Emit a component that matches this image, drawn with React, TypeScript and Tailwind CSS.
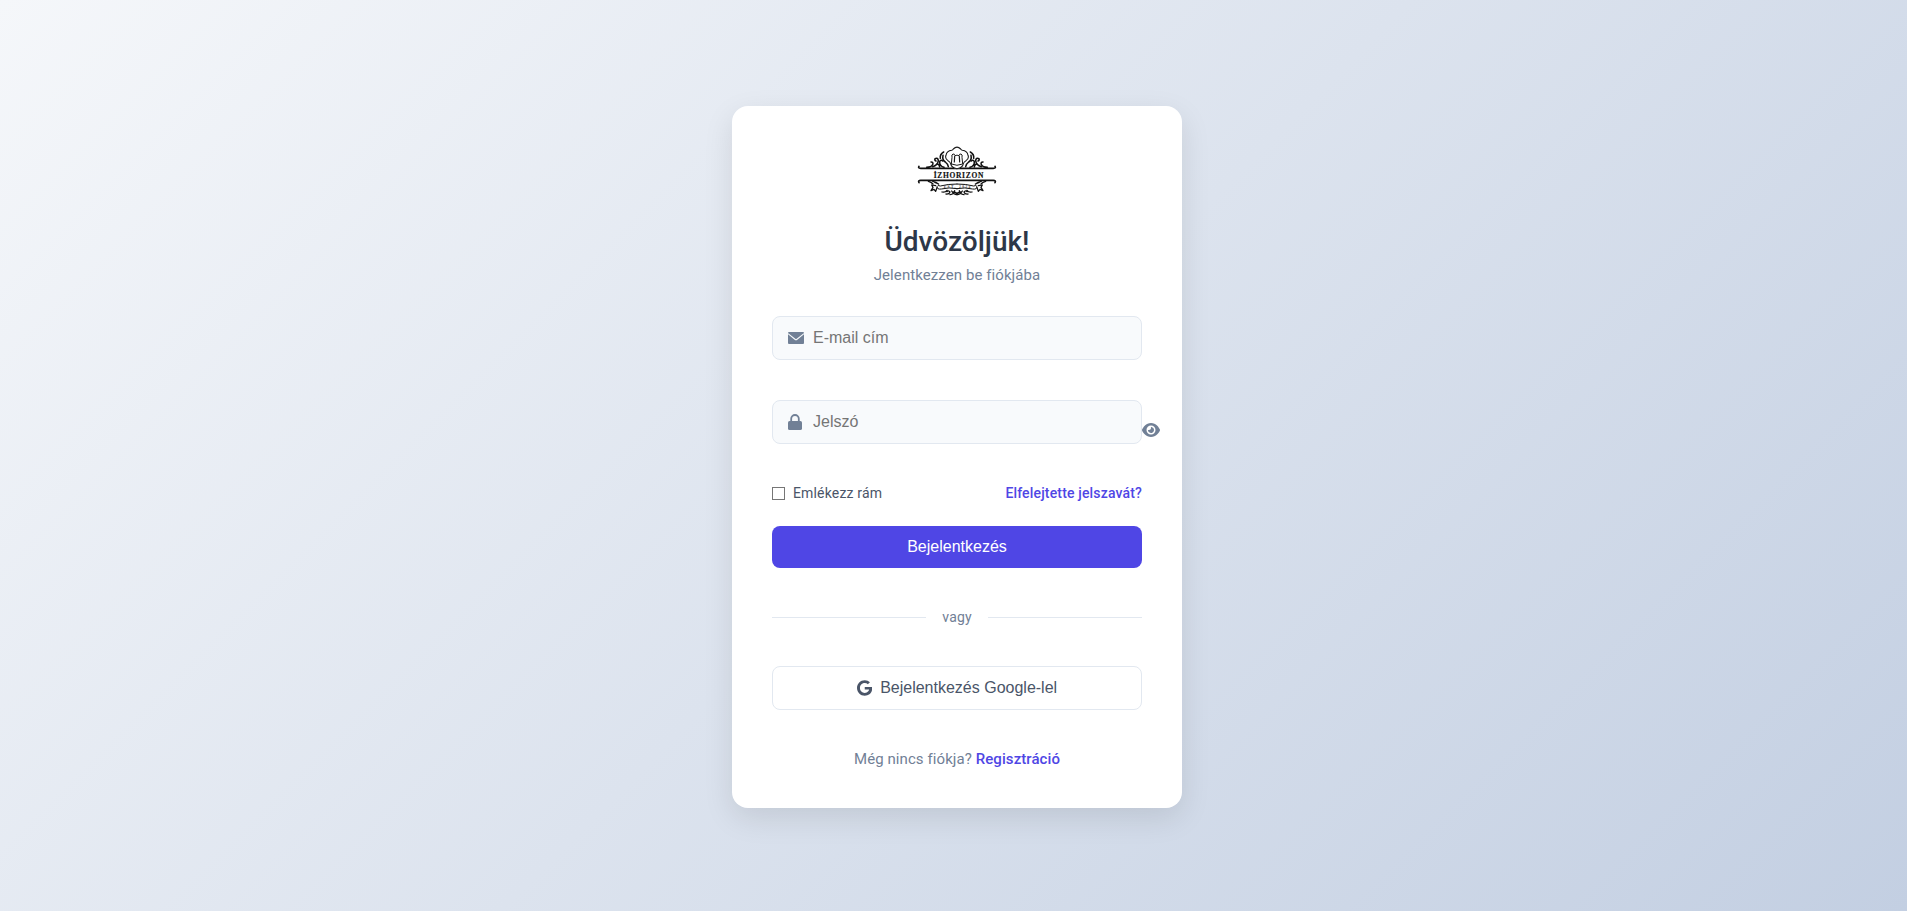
import React, { useState } from "react";
import { FaEye, FaGoogle } from "react-icons/fa6";

function Ornament() {
  return (
    <g fill="none" stroke="#111" strokeLinecap="round" strokeLinejoin="round">
      <g strokeWidth="5">
        <path d="M57 94q-4 6 5 6H171" />
        <path d="M57 143q-4-7 5-7H171" />
      </g>
      <g strokeWidth="4.6">
        <path d="M80 97q14 0 18-8q3-8-5-8" />
        <path d="M98 95q15-4 17-18q-1-10-10-6q-2 5 3 7" />
        <path d="M112 87q7 2 7 9M132 97q-14-4-13-17q4-7 9-2" />
        <path d="M121 70q-2-12 10-19M129 61q-3 14 7 20q8 6 9 14" />
      </g>
      <g strokeWidth="3.8">
        <path d="M85 139q9 2 14 8M98 139q11 1 17 8M104 142l12 5" />
        <path d="M107 152l-12-2l4 7l-6 10l9-4l5 6l4-11" />
        <path d="M171 147q-28 0-50 6q-8-4-10 2q0 9 13 7q22-6 48-1" strokeWidth="3" />
        <path d="M126 171q10 2 15-5M138 177q10 1 12-6q-5-6-9-1M150 179q12-1 14-12M155 168q5 10 16 11M161 171q7 0 10 5" />
      </g>
    </g>
  );
}

function Logo() {
  return (
    <svg viewBox="51 33 240 150" className="mx-auto block h-[50px] w-20" role="img">
      <Ornament />
      <g transform="matrix(-1 0 0 1 342 0)">
        <Ornament />
      </g>
      <g fill="#fff" stroke="#1a1a1a" strokeWidth="3.2" strokeLinejoin="round" strokeLinecap="round">
        <path d="M152 86q-2-6-8-9q-10-7-6-16q2-13 17-15q3-1 5-4q11-11 22 0q2 3 5 4q15 2 17 15q4 9-6 16q-6 3-8 9q-2 13-19 15q-17-2-19-15z" />
        <path d="M154 87l2-20q-2-9 3-10q5-1 6 5q6-3 12 0q1-6 6-5q5 1 3 10l2 20q-17 8-34 0z" strokeWidth="3" />
        <path d="M164 64l-1 17M178 64l1 17" fill="none" strokeWidth="3.6" />
      </g>
      <g transform="translate(175.5 128) scale(1 1.12)">
        <text textAnchor="middle" textLength="149" fill="#111" stroke="#111" strokeWidth="0.5" fontFamily="Liberation Serif, serif" fontWeight="700" fontSize="22.5">
          İZHORIZON
        </text>
      </g>
      <text x="171" y="159" textAnchor="middle" textLength="80" fill="#444" fontFamily="Liberation Serif, serif" fontWeight="700" fontSize="11">
        EST. 2024
      </text>
    </svg>
  );
}

function EnvelopeIcon() {
  return (
    <svg viewBox="0 0 16 16" className="absolute top-3.5 left-4 h-4 w-4" fill="none">
      <rect y="2" width="16" height="12" rx="1" fill="#718096" />
      <path d="M0 3.6L7 9.3Q8 10.1 9 9.3L16 3.6" stroke="#f8fafc" strokeWidth="1.1" />
    </svg>
  );
}

function LockIcon() {
  return (
    <svg viewBox="0 0 14 16" className="absolute top-3.5 left-4 h-4 w-3.5" fill="none">
      <path d="M3.2 8V4.8a3.8 3.8 0 0 1 7.6 0V8" stroke="#718096" strokeWidth="1.8" />
      <rect y="7" width="14" height="9" rx="1.6" fill="#718096" />
    </svg>
  );
}

const fieldClass =
  "h-11 w-full rounded-lg border border-[#e2e8f0] bg-[#f8fafc] pl-10 pr-4 font-['Liberation_Sans',Arial,sans-serif] text-base text-[#2d3748] outline-none placeholder:text-[#757575]";

export default function App() {
  const [visible, setVisible] = useState(false);
  return (
    <main className="flex h-screen items-center justify-center bg-[linear-gradient(135deg,#f5f7fa_0%,#c3cfe2_100%)] font-[Roboto,sans-serif]">
      <section className="mt-[3px] ml-[7px] h-[702px] w-[450px] rounded-2xl bg-white p-10 shadow-[0_10px_30px_rgba(0,0,0,0.1)]">
        <Logo />
        <header className="mt-[25px] text-center">
          <h1 className="text-[28px] leading-[42px] font-medium text-[#2d3748]">Üdvözöljük!</h1>
          <p className="text-[15px] leading-6 tracking-[0.08px] text-[#718096]">Jelentkezzen be fiókjába</p>
        </header>
        <form className="mt-[29px]" onSubmit={(e) => e.preventDefault()}>
          <div className="relative h-11">
            <input type="email" placeholder="E-mail cím" className={fieldClass} />
            <EnvelopeIcon />
          </div>
          <div className="relative mt-10 h-11">
            <input type={visible ? "text" : "password"} placeholder="Jelszó" className={fieldClass} />
            <LockIcon />
            <button type="button" onClick={() => setVisible(!visible)} className="absolute top-[22px] left-full text-[#718096]">
              <FaEye className="h-4 w-[18px]" />
            </button>
          </div>
          <div className="mt-[38px] flex h-[22px] items-center justify-between text-sm tracking-[0.16px]">
            <label className="flex items-center gap-2 text-[#4a5568]">
              <input type="checkbox" className="h-[13px] w-[13px] appearance-none border border-[#767676] bg-white checked:bg-[#4f46e5]" />
              Emlékezz rám
            </label>
            <a href="#" className="font-medium text-[#4f46e5]">Elfelejtette jelszavát?</a>
          </div>
          <button type="submit" className="mt-[22px] flex h-[42px] w-full items-center justify-center rounded-lg bg-[#4f46e5] font-['Liberation_Sans',Arial,sans-serif] text-base text-white">
            Bejelentkezés
          </button>
          <div className="mt-[38px] flex h-[22px] items-center gap-4 text-sm tracking-[0.16px] text-[#718096]">
            <span className="h-px flex-1 bg-[#e2e8f0]" />
            vagy
            <span className="h-px flex-1 bg-[#e2e8f0]" />
          </div>
          <button type="button" className="mt-[38px] flex h-11 w-full items-center justify-center gap-2 rounded-lg border border-[#e2e8f0] bg-white font-['Liberation_Sans',Arial,sans-serif] text-base text-[#4a5568]">
            <FaGoogle className="h-4 w-[15.25px]" />
            Bejelentkezés Google-lel
          </button>
        </form>
        <p className="mt-[37px] text-center text-[15px] leading-6 tracking-[0.08px] text-[#718096]">
          Még nincs fiókja?{" "}
          <a href="#" className="font-medium text-[#4f46e5]">Regisztráció</a>
        </p>
      </section>
    </main>
  );
}
